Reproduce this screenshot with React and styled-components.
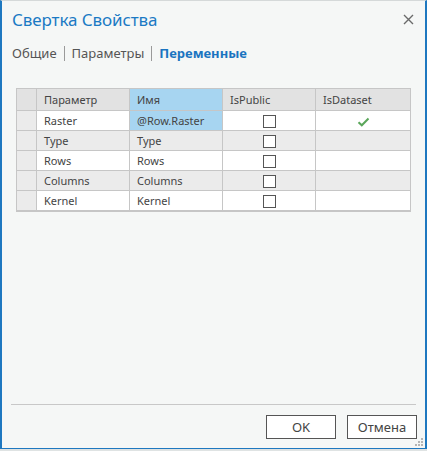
import React from 'react';
import styled, { createGlobalStyle } from 'styled-components';

const GlobalStyle = createGlobalStyle`
  html, body {
    margin: 0;
    padding: 0;
    background: #dfe3e3;
  }
  * {
    box-sizing: border-box;
  }
`;

const Dialog = styled.div`
  width: 427px;
  height: 449px;
  background-color: #f5f7f6;
  border: 1px solid #1e78c0;
  border-top-color: #d5d9d9;
  border-left-width: 2px;
  border-right-width: 2px;
  display: flex;
  flex-direction: column;
  font-family: 'Noto Sans', 'Open Sans', sans-serif;
  color: #333;
  position: relative;
`;

const TitleBar = styled.div`
  display: flex;
  align-items: center;
  justify-content: space-between;
  padding: 5px 10px 0 10px;
  height: 32px;
`;

const Title = styled.h1`
  margin: 0;
  font-size: 17px;
  font-weight: 400;
  color: #1b7ac4;
  letter-spacing: -0.1px;
`;

const CloseButton = styled.button`
  border: none;
  background: transparent;
  padding: 0;
  width: 14px;
  height: 14px;
  display: flex;
  align-items: center;
  justify-content: center;
  cursor: pointer;
`;

const Tabs = styled.nav`
  display: flex;
  align-items: center;
  padding: 0 10px;
  margin-top: 9px;
  height: 22px;
  font-size: 13px;
`;

const Tab = styled.span`
  color: ${({ $active }) => ($active ? '#1a74c0' : '#555')};
  font-weight: ${({ $active }) => ($active ? 700 : 400)};
`;

const TabDivider = styled.span`
  width: 1px;
  height: 15px;
  background-color: #9a9a9a;
  margin: 0 7px;
`;

const TableWrap = styled.div`
  margin: 24px 0 0 14px;
`;

const Grid = styled.table`
  border-collapse: collapse;
  table-layout: fixed;
  font-size: 11px;
  color: #444;
  border: 1px solid #c6c6c6;
  border-bottom-width: 2px;
`;

const HeadCell = styled.th`
  height: 22px;
  font-weight: 400;
  text-align: left;
  padding: 0 0 0 7px;
  background-color: ${({ $selected }) => ($selected ? '#a7d5f1' : '#e2e2e2')};
  border-left: 1px solid #c6c6c6;
  border-bottom: 1px solid #c6c6c6;
`;

const RowHead = styled.td`
  background-color: #ebebeb;
  border-bottom: 1px solid #c6c6c6;
`;

const Cell = styled.td`
  height: 20px;
  padding: 0 0 0 7px;
  border-left: 1px solid #c6c6c6;
  border-bottom: 1px solid #c6c6c6;
  background-color: ${({ $selected, $shade }) =>
    $selected ? '#a7d5f1' : $shade ? '#ebebeb' : '#ffffff'};
  white-space: nowrap;
  overflow: hidden;
`;

const CenterCell = styled(Cell)`
  padding: 0;
  text-align: center;
  vertical-align: middle;
`;

const Box = styled.span`
  display: inline-block;
  width: 13px;
  height: 13px;
  border: 1px solid #555;
  background-color: #fff;
  vertical-align: middle;
`;

const Spacer = styled.div`
  flex: 1;
`;

const Divider = styled.hr`
  margin: 0 9px;
  border: none;
  border-top: 1px solid #c8c8c8;
`;

const Footer = styled.div`
  display: flex;
  justify-content: flex-end;
  gap: 11px;
  padding: 10px 8px 9px 0;
`;

const Button = styled.button`
  width: 70px;
  height: 24px;
  background-color: #fff;
  border: 1px solid #555;
  font-family: inherit;
  font-size: 13px;
  color: #444;
  padding: 0;
`;

const Grip = styled.svg`
  position: absolute;
  right: 1px;
  bottom: 1px;
`;

const columns = [
  { key: 'param', label: 'Параметр', width: 93 },
  { key: 'name', label: 'Имя', width: 93, selected: true },
  { key: 'pub', label: 'IsPublic', width: 93 },
  { key: 'ds', label: 'IsDataset', width: 95 },
];

const rows = [
  { param: 'Raster', name: '@Row.Raster', dataset: true },
  { param: 'Type', name: 'Type' },
  { param: 'Rows', name: 'Rows' },
  { param: 'Columns', name: 'Columns' },
  { param: 'Kernel', name: 'Kernel' },
];

const CloseIcon = () => (
  <svg width="11" height="11" viewBox="0 0 11 11">
    <path d="M1 1L10 10M10 1L1 10" stroke="#6a6a6a" strokeWidth="1.4" />
  </svg>
);

const CheckMark = () => (
  <svg width="13" height="10" viewBox="0 0 13 10" style={{ verticalAlign: 'middle' }}>
    <path d="M1.5 5.2L4.8 8.3L11.5 1.5" fill="none" stroke="#5aa65a" strokeWidth="2" />
  </svg>
);

export default function App() {
  return (
    <>
      <GlobalStyle />
      <Dialog>
        <TitleBar>
          <Title>Свертка Свойства</Title>
          <CloseButton aria-label="Закрыть">
            <CloseIcon />
          </CloseButton>
        </TitleBar>

        <Tabs>
          <Tab>Общие</Tab>
          <TabDivider />
          <Tab>Параметры</Tab>
          <TabDivider />
          <Tab $active>Переменные</Tab>
        </Tabs>

        <TableWrap>
          <Grid>
            <colgroup>
              <col style={{ width: 20 }} />
              {columns.map((c) => (
                <col key={c.key} style={{ width: c.width }} />
              ))}
            </colgroup>
            <thead>
              <tr>
                <HeadCell as="td" style={{ borderLeft: 'none' }} />
                {columns.map((c) => (
                  <HeadCell key={c.key} $selected={c.selected}>
                    {c.label}
                  </HeadCell>
                ))}
              </tr>
            </thead>
            <tbody>
              {rows.map((r, i) => {
                const shade = i % 2 === 1;
                return (
                  <tr key={r.param}>
                    <RowHead />
                    <Cell $shade={shade}>{r.param}</Cell>
                    <Cell $shade={shade} $selected={i === 0}>
                      {r.name}
                    </Cell>
                    <CenterCell $shade={shade}>
                      <Box />
                    </CenterCell>
                    <CenterCell $shade={shade}>{r.dataset && <CheckMark />}</CenterCell>
                  </tr>
                );
              })}
            </tbody>
          </Grid>
        </TableWrap>

        <Spacer />
        <Divider />
        <Footer>
          <Button>OK</Button>
          <Button>Отмена</Button>
        </Footer>

        <Grip width="10" height="10" viewBox="0 0 10 10">
          <g fill="#b5b5b5">
            <rect x="7" y="1" width="2" height="2" />
            <rect x="4" y="4" width="2" height="2" />
            <rect x="7" y="4" width="2" height="2" />
            <rect x="1" y="7" width="2" height="2" />
            <rect x="4" y="7" width="2" height="2" />
            <rect x="7" y="7" width="2" height="2" />
          </g>
        </Grip>
      </Dialog>
    </>
  );
}
